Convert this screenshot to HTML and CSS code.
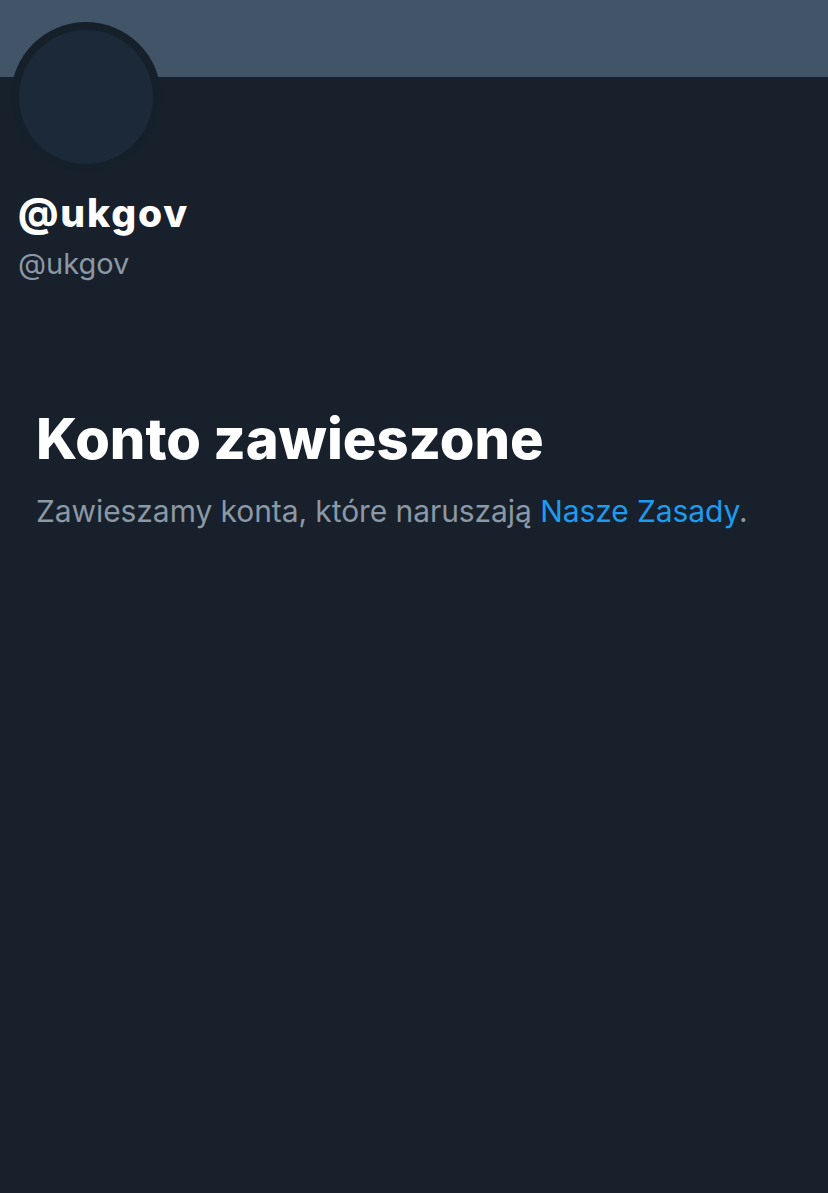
FILE: index.html
```html
<!DOCTYPE html>
<html lang="pl">
<head>
<meta charset="utf-8">
<link rel="stylesheet" href="styles.css">
</head>
<body>
<div class="page">
  <div class="banner"></div>
  <div class="profile">
    <div class="avatar"><div class="avatar-inner"></div></div>
    <div class="name">@ukgov</div>
    <div class="handle">@ukgov</div>
  </div>
  <div class="notice">
    <h1 class="title">Konto zawieszone</h1>
    <p class="desc">Zawieszamy konta, które naruszają <a class="link" href="#">Nasze Zasady</a>.</p>
  </div>
</div>
</body>
</html>
```
FILE: styles.css
```css
html, body {
  margin: 0;
  padding: 0;
  background: #17202b;
}
body {
  font-family: "Inter", "Liberation Sans", sans-serif;
  width: 828px;
  height: 1193px;
  overflow: hidden;
}
.page {
  display: flex;
  flex-direction: column;
}
.banner {
  height: 77px;
  background: #425467;
}
.profile {
  padding: 0 18px;
  display: flex;
  flex-direction: column;
}
.avatar {
  width: 150px;
  height: 150px;
  margin-top: -55px;
  margin-left: -7px;
  border-radius: 50%;
  background: #16202b;
  display: flex;
  align-items: center;
  justify-content: center;
}
.avatar-inner {
  width: 134px;
  height: 134px;
  border-radius: 50%;
  background: #1c2939;
}
.name {
  margin-top: 18px;
  font-size: 39px;
  font-weight: 800;
  color: #ffffff;
  line-height: 46px;
  letter-spacing: 1.9px;
}
.handle {
  font-size: 29px;
  color: #8b98a5;
  line-height: 36px;
  margin-top: 10px;
}
.notice {
  padding: 0 36px;
  margin-top: 121px;
}
.title {
  margin: 0;
  font-size: 56px;
  font-weight: 800;
  color: #ffffff;
  line-height: 72px;
  letter-spacing: 0;
}
.desc {
  margin: 16px 0 0;
  font-size: 30px;
  color: #8b98a5;
  line-height: 40px;
  letter-spacing: -0.08px;
}
.link {
  color: #1d9bf0;
  text-decoration: none;
}
```
